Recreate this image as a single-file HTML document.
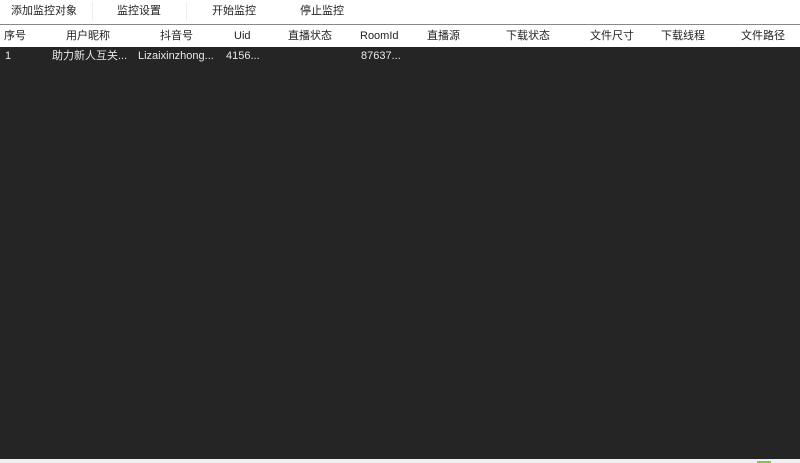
<!DOCTYPE html>
<html><head><meta charset="utf-8"><style>
*{margin:0;padding:0;box-sizing:border-box}
body{width:800px;height:463px;overflow:hidden;background:#fff;font-family:"Liberation Sans","Noto Sans CJK SC",sans-serif;font-size:11px;color:#222;position:relative}
.t{position:absolute;white-space:nowrap;line-height:13px}
.sep{position:absolute;top:2px;width:1px;height:19px;background:#eee}
</style></head><body>
<div class="t" style="left:11px;top:5px">添加监控对象</div>
<div class="sep" style="left:92px"></div>
<div class="t" style="left:117px;top:5px">监控设置</div>
<div class="sep" style="left:186px"></div>
<div class="t" style="left:212px;top:5px">开始监控</div>
<div class="t" style="left:300px;top:5px">停止监控</div>
<div style="position:absolute;left:0;top:24px;width:800px;height:1px;background:#888"></div>
<div class="t" style="left:4px;top:30px">序号</div>
<div class="t" style="left:66px;top:30px">用户昵称</div>
<div class="t" style="left:160px;top:30px">抖音号</div>
<div class="t" style="left:234px;top:30px">Uid</div>
<div class="t" style="left:288px;top:30px">直播状态</div>
<div class="t" style="left:360px;top:30px">RoomId</div>
<div class="t" style="left:427px;top:30px">直播源</div>
<div class="t" style="left:506px;top:30px">下载状态</div>
<div class="t" style="left:590px;top:30px">文件尺寸</div>
<div class="t" style="left:661px;top:30px">下载线程</div>
<div class="t" style="left:741px;top:30px">文件路径</div>
<div style="position:absolute;left:0;top:47px;width:800px;height:412px;background:#252525"></div>
<div class="t" style="left:5px;top:50px;color:#e8e8e8">1</div>
<div class="t" style="left:52px;top:50px;color:#e8e8e8">助力新人互关...</div>
<div class="t" style="left:138px;top:50px;color:#e8e8e8">Lizaixinzhong...</div>
<div class="t" style="left:226px;top:50px;color:#e8e8e8">4156...</div>
<div class="t" style="left:361px;top:50px;color:#e8e8e8">87637...</div>
<div style="position:absolute;left:0;top:459px;width:800px;height:4px;background:#f0f0f0"></div>
<div style="position:absolute;left:757px;top:461px;width:14px;height:2px;background:#8bc34a"></div>
</body></html>
